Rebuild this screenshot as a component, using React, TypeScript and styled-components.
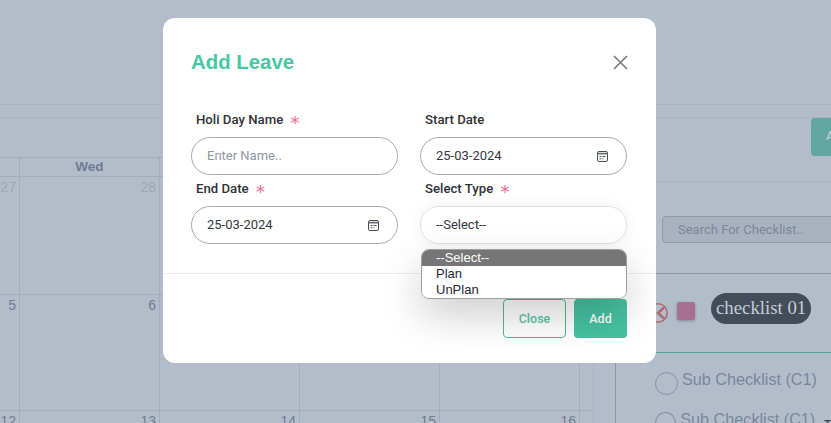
import styled, { createGlobalStyle } from 'styled-components';

const GlobalStyle = createGlobalStyle`
  * {
    box-sizing: border-box;
  }

  html,
  body {
    margin: 0;
    height: 100%;
    overflow: hidden;
  }

  body {
    background: #b3bdc9;
    font-family: 'Roboto', 'Liberation Sans', sans-serif;
  }
`;

const CalendarIcon = () => (
  <svg width="13" height="13" viewBox="0 0 13 13" fill="none">
    <rect x="1.5" y="1.5" width="10" height="10" rx="1.5" stroke="#4a4e54" strokeWidth="1" />
    <path d="M1.5 3.6h10" stroke="#6a6e74" strokeWidth="1.6" />
    <path d="M3.5 6.5h2M6.5 6.5h3M3.5 8.8h2M6.5 8.8h1" stroke="#55595f" strokeWidth="1" />
  </svg>
);

const weeks = [
  ['27', '28', '29', '1', '2'],
  ['5', '6', '7', '8', '9'],
  ['12', '13', '14', '15', '16'],
];

const App = () => {
  return (
    <>
      <GlobalStyle />
      <Page>
        <TopBar />
        <SubBar />
        <Body>
          <Calendar>
            <HeadRow>
              <HeadCell />
              <HeadCell>Wed</HeadCell>
              <HeadCell>Thu</HeadCell>
              <HeadCell>Fri</HeadCell>
              <HeadCell>Sat</HeadCell>
            </HeadRow>
            {weeks.map((week, i) => (
              <Week key={week[0]} $height={i === 0 ? 118 : 116}>
                {week.map((day) => (
                  <Day key={day} $muted={i === 0}>
                    {day}
                  </Day>
                ))}
              </Week>
            ))}
          </Calendar>
          <Panel>
            <PanelTop>
              <AddChecklist>Add</AddChecklist>
            </PanelTop>
            <Search placeholder="Search For Checklist.." />
            <Checklist>
              <ChecklistRow>
                <BackIcon width="20" height="20" viewBox="0 0 20 20" fill="none">
                  <circle cx="10" cy="10" r="9.2" stroke="#b0686c" strokeWidth="1.5" />
                  <path d="M16 4.5L10 10l6 5.5" stroke="#b0686c" strokeWidth="2.4" />
                </BackIcon>
                <Swatch />
                <Pill>checklist 01</Pill>
              </ChecklistRow>
              <SubItem>
                <Radio />
                Sub Checklist (C1)
              </SubItem>
              <SubItem>
                <Radio />
                Sub Checklist (C1)
                <Mark>T</Mark>
              </SubItem>
            </Checklist>
          </Panel>
        </Body>

        <Modal>
          <ModalHeader>
            <Title>Add Leave</Title>
            <CloseIcon width="17" height="17" viewBox="0 0 17 17" fill="none">
              <path d="M2 2l13 13M15 2L2 15" stroke="#7a7a7a" strokeWidth="1.6" />
            </CloseIcon>
          </ModalHeader>
          <Form>
            <Field>
              <Label>
                Holi Day Name <Star>*</Star>
              </Label>
              <InputBox>
                <Input placeholder="Enter Name.." />
              </InputBox>
            </Field>
            <Field>
              <Label>Start Date</Label>
              <InputBox>
                <Input defaultValue="25-03-2024" />
                <CalendarIcon />
              </InputBox>
            </Field>
            <Field>
              <Label>
                End Date <Star>*</Star>
              </Label>
              <InputBox>
                <Input defaultValue="25-03-2024" />
                <CalendarIcon />
              </InputBox>
            </Field>
            <Field>
              <Label>
                Select Type <Star>*</Star>
              </Label>
              <SelectBox>
                --Select--
                <Options>
                  <Option $selected>--Select--</Option>
                  <Option>Plan</Option>
                  <Option>UnPlan</Option>
                </Options>
              </SelectBox>
            </Field>
          </Form>
          <Footer>
            <CloseButton>Close</CloseButton>
            <AddButton>Add</AddButton>
          </Footer>
        </Modal>
      </Page>
    </>
  );
};

export default App;

const Page = styled.div`
  position: relative;
  width: 831px;
  height: 423px;
  overflow: hidden;
`;

const TopBar = styled.div`
  height: 105px;
  border-bottom: 1px solid #a9b4c4;
`;

const SubBar = styled.div`
  height: 13px;
  border-bottom: 1px solid #a9b4c2;
`;

const Body = styled.div`
  display: flex;
`;

const Calendar = styled.div`
  width: 593px;
  padding-top: 39px;
  flex-shrink: 0;
`;

const HeadRow = styled.div`
  display: grid;
  grid-template-columns: 20px repeat(4, 140px);
  height: 20px;
  border-top: 1px solid #a3aebd;
  border-bottom: 1px solid #a3aebd;
`;

const HeadCell = styled.div`
  border-right: 1px solid #a3aebd;
  text-align: center;
  font-family: 'Liberation Sans', sans-serif;
  font-weight: 700;
  font-size: 13.5px;
  line-height: 18px;
  color: #6e7c95;
`;

const Week = styled.div<{ $height: number }>`
  display: grid;
  grid-template-columns: 20px repeat(4, 140px);
  height: ${(p) => p.$height}px;
  border-bottom: 1px solid #a3aebd;
`;

const Day = styled.div<{ $muted?: boolean }>`
  border-right: 1px solid #a3aebd;
  padding: 2px 3px 0 0;
  text-align: right;
  font-family: 'Liberation Sans', sans-serif;
  font-size: 14px;
  line-height: 16px;
  color: ${(p) => (p.$muted ? '#9da8b6' : '#717e90')};
  white-space: nowrap;
`;

const Panel = styled.div`
  flex: 1;
  min-width: 0;
  border-left: 1px solid #a9b3c8;
`;

const PanelTop = styled.div`
  display: flex;
  justify-content: flex-start;
  height: 64px;
  padding: 0 0 0 217px;
  border-bottom: 1px solid #a9b4c2;
  overflow: hidden;
`;

const AddChecklist = styled.div`
  flex-shrink: 0;
  width: 60px;
  height: 38px;
  padding: 10px 0 0 15px;
  border-radius: 4px;
  background: #62a6a2;
  color: #b9ced4;
  font-weight: 500;
  font-size: 13px;
`;

const Search = styled.input`
  display: block;
  width: 240px;
  height: 27px;
  margin: 34px 0 0 68px;
  padding: 0 15px;
  border: 1px solid #8e99a9;
  border-radius: 4px;
  background: #a9b3bf;
  font-family: 'Roboto', sans-serif;
  font-size: 13px;

  &::placeholder {
    color: #7a869e;
    opacity: 1;
  }
`;

const Checklist = styled.div`
  height: 200px;
  margin: 30px 0 0 21px;
  padding-left: 32px;
  border-top: 1px solid #8c96a5;
  border-left: 1px solid #8c96a5;
  overflow: hidden;
`;

const ChecklistRow = styled.div`
  display: flex;
  align-items: center;
  gap: 9px;
  height: 79px;
  padding-bottom: 4px;
  border-bottom: 1px solid #4fa99b;
`;

const BackIcon = styled.svg`
  margin-top: 3px;
`;

const Swatch = styled.span`
  width: 18px;
  height: 18px;
  border-radius: 2px;
  background: #a8708f;
  box-shadow: 0 1px 3px rgba(80, 90, 120, 0.5);
`;

const Pill = styled.span`
  margin: -5px 0 0 7px;
  padding: 0 5px;
  height: 31px;
  border-radius: 16px;
  background: #434c59;
  color: #c6cdd7;
  font-family: 'Liberation Serif', serif;
  font-size: 18.8px;
  line-height: 30px;
  white-space: nowrap;
`;

const SubItem = styled.div`
  display: flex;
  align-items: flex-start;
  gap: 4px;
  height: 24px;
  margin: 17px 0 0 7px;
  color: #7688a0;
  font-family: 'Liberation Sans', sans-serif;
  font-size: 16.2px;
  line-height: 18px;
  white-space: nowrap;

  & + & {
    margin-top: 16px;
  }
`;

const Radio = styled.span`
  width: 23px;
  height: 23px;
  margin-top: 2px;
  border: 1px solid #8292a8;
  border-radius: 50%;
`;

const Mark = styled.span`
  margin: 5px 0 0 5px;
  color: #3c4654;
  font-size: 11px;
  font-weight: 700;
`;

const Modal = styled.div`
  position: absolute;
  top: 18px;
  left: 163px;
  width: 493px;
  height: 345px;
  border-radius: 12px;
  background: #fff;
  overflow: hidden;
`;

const ModalHeader = styled.div`
  display: flex;
  align-items: center;
  justify-content: space-between;
  height: 92px;
  padding: 0 27px 3px 28px;
`;

const Title = styled.h2`
  margin: 0;
  color: #45c8a3;
  font-family: 'Liberation Sans', sans-serif;
  font-weight: 700;
  font-size: 20.4px;
`;

const CloseIcon = styled.svg`
  display: block;
`;

const Form = styled.div`
  display: grid;
  grid-template-columns: 207px 207px;
  column-gap: 22px;
  row-gap: 4px;
  padding: 0 29px 29px 28px;
  border-bottom: 1px solid #eeeeee;
`;

const Field = styled.div`
  position: relative;
`;

const Label = styled.label`
  display: block;
  height: 18px;
  margin-bottom: 9px;
  padding: 1px 0 0 5px;
  color: #2f3237;
  font-weight: 500;
  font-size: 13.2px;
  line-height: 18px;
`;

const Star = styled.span`
  display: inline-block;
  height: 0;
  margin-left: 4px;
  color: #ec6c90;
  font-family: 'DejaVu Sans', sans-serif;
  font-weight: 400;
  font-size: 18px;
  line-height: 0;
  vertical-align: -5px;
`;

const InputBox = styled.div`
  display: flex;
  align-items: center;
  height: 38px;
  padding: 0 17px 0 15px;
  border: 1px solid #aaaaaa;
  border-radius: 19px;
  background: #fff;
`;

const Input = styled.input`
  flex: 1;
  min-width: 0;
  padding: 0 0 2px;
  border: 0;
  outline: 0;
  background: transparent;
  color: #34383d;
  font-family: 'Roboto', sans-serif;
  font-size: 13px;

  &::placeholder {
    color: #8f97a8;
    opacity: 1;
  }
`;

const SelectBox = styled.div`
  position: relative;
  height: 38px;
  padding-left: 15px;
  border: 1px solid #dee2e6;
  border-radius: 19px;
  background: #fff;
  color: #34383d;
  font-size: 13px;
  line-height: 36px;
  box-shadow: 0 0 14px rgba(0, 0, 0, 0.07);
`;

const Options = styled.ul`
  position: absolute;
  top: 42px;
  left: 0;
  right: -1px;
  z-index: 2;
  margin: 0;
  padding: 0;
  list-style: none;
  border: 1px solid #a0a0a0;
  border-radius: 8px;
  background: #fff;
  overflow: hidden;
  box-shadow: 0 16px 40px rgba(0, 0, 0, 0.2);
`;

const Option = styled.li<{ $selected?: boolean }>`
  height: 16px;
  padding-left: 14px;
  background: ${(p) => (p.$selected ? '#767676' : '#fff')};
  color: ${(p) => (p.$selected ? '#fff' : '#1c2733')};
  font-family: 'Liberation Sans', sans-serif;
  font-size: 13px;
  line-height: 16px;
`;

const Footer = styled.div`
  display: flex;
  justify-content: flex-end;
  gap: 8px;
  padding: 25px 29px 0 0;
`;

const CloseButton = styled.button`
  width: 63px;
  height: 39px;
  border: 1px solid #52b89a;
  border-radius: 4px;
  background: transparent;
  color: #5cc4a5;
  font-family: 'Roboto', sans-serif;
  font-weight: 500;
  font-size: 12.5px;
`;

const AddButton = styled.button`
  width: 53px;
  height: 39px;
  border: 0;
  border-radius: 4px;
  background: #45c3a1;
  color: #fff;
  font-family: 'Roboto', sans-serif;
  font-weight: 500;
  font-size: 12.5px;
`;
